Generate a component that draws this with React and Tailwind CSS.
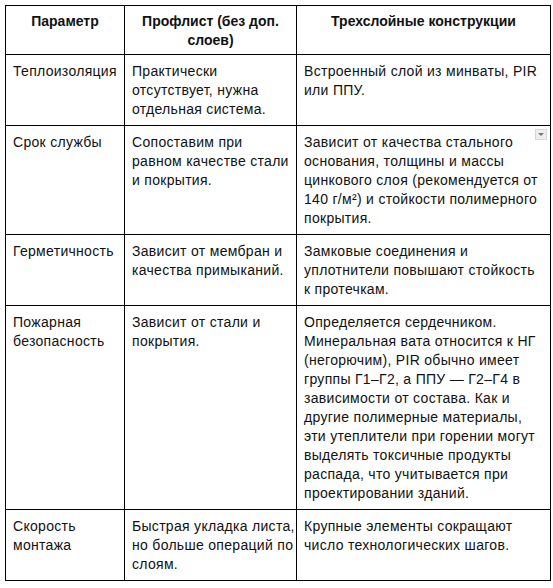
import React from "react";

const header = [["Параметр"], ["Профлист (без доп.", "слоев)"], ["Трехслойные конструкции"]];

const rows = [
  [["Теплоизоляция"], ["Практически", "отсутствует, нужна", "отдельная система."], ["Встроенный слой из минваты, PIR", "или ППУ."]],
  [["Срок службы"], ["Сопоставим при", "равном качестве стали", "и покрытия."], ["Зависит от качества стального", "основания, толщины и массы", "цинкового слоя (рекомендуется от", "140 г/м²) и стойкости полимерного", "покрытия."]],
  [["Герметичность"], ["Зависит от мембран и", "качества примыканий."], ["Замковые соединения и", "уплотнители повышают стойкость", "к протечкам."]],
  [["Пожарная", "безопасность"], ["Зависит от стали и", "покрытия."], ["Определяется сердечником.", "Минеральная вата относится к НГ", "(негорючим), PIR обычно имеет", "группы Г1–Г2, а ППУ — Г2–Г4 в", "зависимости от состава. Как и", "другие полимерные материалы,", "эти утеплители при горении могут", "выделять токсичные продукты", "распада, что учитывается при", "проектировании зданий."]],
  [["Скорость", "монтажа"], ["Быстрая укладка листа,", "но больше операций по", "слоям."], ["Крупные элементы сокращают", "число технологических шагов."]],
];

function Lines({ lines }) {
  return lines.map((l, i) => (
    <span key={i} className="block whitespace-nowrap">
      {l}
    </span>
  ));
}

export default function App() {
  return (
    <div className="bg-white w-[553px] h-[588px] pt-[5px] pl-[5px]" style={{ fontFamily: '"Liberation Sans", Arial, sans-serif' }}>
      <div className="grid grid-cols-[119px_172px_254px] w-[546px] border-t border-l border-black text-[14px] leading-[19px] text-[#111]">
        {header.map((h, i) => (
          <div key={i} className="border-r border-b border-black px-[7px] pt-[6px] pb-[4px] font-bold text-center">
            <Lines lines={h} />
          </div>
        ))}
        {rows.map((r, ri) =>
          r.map((c, ci) => (
            <div key={ri + "-" + ci} className="relative border-r border-b border-black px-[7px] pt-[7px] pb-[6px] tracking-[0.3px]">
              <Lines lines={c} />
              {ri === 1 && ci === 2 && (
                <div className="absolute right-[3px] top-[3px] w-[12px] h-[11px] bg-[#eeeeee] border border-[#d8d8d8] flex items-center justify-center">
                  <div className="w-0 h-0 border-l-[3px] border-r-[3px] border-t-[3px] border-l-transparent border-r-transparent border-t-[#777]" />
                </div>
              )}
            </div>
          ))
        )}
      </div>
    </div>
  );
}
